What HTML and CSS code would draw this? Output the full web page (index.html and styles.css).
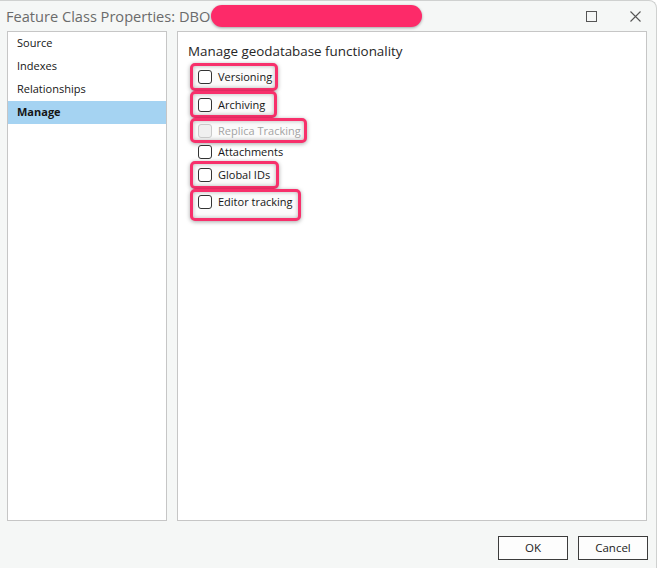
FILE: index.html
```html
<!DOCTYPE html>
<html lang="en">
<head>
<meta charset="utf-8">
<title>Feature Class Properties</title>
<link rel="stylesheet" href="styles.css">
</head>
<body>
<div class="window">
  <div class="titlebar">
    <span class="title">Feature Class Properties: DBO</span>
    <span class="redact"></span>
    <span class="spacer"></span>
    <svg class="tb-icon max" width="11" height="11" viewBox="0 0 11 11"><rect x="0.5" y="0.5" width="10" height="10" fill="none" stroke="#555" stroke-width="1"/></svg>
    <svg class="tb-icon close" width="11" height="11" viewBox="0 0 11 11"><path d="M0.5 0.5 L10.5 10.5 M10.5 0.5 L0.5 10.5" stroke="#555" stroke-width="1.1" fill="none"/></svg>
  </div>
  <div class="content">
    <div class="nav">
      <div class="nav-item">Source</div>
      <div class="nav-item">Indexes</div>
      <div class="nav-item">Relationships</div>
      <div class="nav-item selected">Manage</div>
    </div>
    <div class="panel">
      <div class="heading">Manage geodatabase functionality</div>
      <div class="checks">
        <label class="check marked m1"><span class="box"></span><span>Versioning</span></label>
        <label class="check marked m2"><span class="box"></span><span>Archiving</span></label>
        <label class="check marked m3 disabled"><span class="box"></span><span>Replica Tracking</span></label>
        <label class="check plain"><span class="box"></span><span>Attachments</span></label>
        <label class="check marked m5"><span class="box"></span><span>Global IDs</span></label>
        <label class="check marked m6"><span class="box"></span><span>Editor tracking</span></label>
      </div>
    </div>
  </div>
  <div class="footer">
    <button class="btn">OK</button>
    <button class="btn">Cancel</button>
  </div>
</div>
</body>
</html>
```
FILE: styles.css
```css
html, body {
  margin: 0;
  padding: 0;
  background: #ffffff;
}
body {
  font-family: "Open Sans", "Noto Sans", sans-serif;
  font-size: 11px;
  color: #151515;
}
.window {
  width: 657px;
  height: 568px;
  box-sizing: border-box;
  background: #f5f7f6;
  border-top: 1px solid #cfd1d0;
  border-right: 1px solid #cfd1d0;
  border-top-right-radius: 8px;
  display: flex;
  flex-direction: column;
}
.titlebar {
  height: 30px;
  display: flex;
  align-items: center;
  padding-left: 6px;
  padding-right: 15px;
}
.title {
  font-size: 14.6px;
  color: #6b6b6b;
  white-space: nowrap;
  padding-bottom: 1px;
}
.redact {
  display: block;
  width: 211px;
  height: 22px;
  margin-left: 1px;
  border-radius: 11px;
  background: #fd2a69;
  box-shadow: 0 1px 3px rgba(0,0,0,0.35);
}
.spacer { flex: 1; }
.tb-icon { display: block; }
.max { margin-right: 33px; }
.content {
  height: 490px;
  display: flex;
  gap: 10px;
  padding: 0 9px 0 7px;
}
.nav {
  width: 160px;
  box-sizing: border-box;
  background: #ffffff;
  border: 1px solid #c6c6c6;
}
.nav-item {
  height: 23px;
  line-height: 21px;
  padding-left: 9px;
  padding-bottom: 2px;
  box-sizing: border-box;
  color: #151515;
}
.nav-item.selected {
  background: #a5d3f2;
  font-weight: 700;
}
.panel {
  flex: 1;
  box-sizing: border-box;
  background: #ffffff;
  border: 1px solid #c6c6c6;
  padding: 11px 10px;
}
.heading {
  font-size: 13.4px;
  line-height: 17px;
  padding-bottom: 1px;
  color: #262626;
}
.checks {
  margin-top: 2px;
  margin-left: 2px;
  display: flex;
  flex-direction: column;
  align-items: flex-start;
}
.check {
  display: flex;
  align-items: center;
  gap: 6px;
  box-sizing: border-box;
  white-space: nowrap;
}
.check span:last-child {
  padding-bottom: 1px;
}
.box {
  display: block;
  flex: none;
  width: 14px;
  height: 14px;
  box-sizing: border-box;
  border: 1px solid #333333;
  border-radius: 3px;
  background: #ffffff;
}
.check.plain {
  height: 18px;
  padding-left: 8px;
}
.marked {
  border: 3px solid #f7306b;
  border-radius: 5px;
  padding: 0 0 0 5px;
  background: #fbfbfb;
  box-shadow: 0 1px 4px rgba(0,0,0,0.35), inset 0 0 4px rgba(0,0,0,0.28);
}
.m1 { height: 28px; width: 88px; }
.m2 { height: 27px; width: 87px; }
.m3 { height: 25px; width: 117px; }
.m5 { height: 28px; width: 89px; }
.m6 { height: 32px; width: 111px; padding-bottom: 6px; }
.disabled { color: #a3a3a3; }
.disabled .box {
  border-color: #c9c9c9;
  background: #f0f0f0;
}
.footer {
  flex: 1;
  display: flex;
  justify-content: flex-end;
  align-items: flex-start;
  gap: 10px;
  padding: 15px 8px 0 0;
}
.btn {
  width: 70px;
  height: 24px;
  box-sizing: border-box;
  border: 1px solid #3c3c3c;
  background: #fdfdfd;
  font-family: "Open Sans", "Noto Sans", sans-serif;
  font-size: 11.5px;
  color: #1b1b1b;
  padding: 0 0 1px 0;
  border-radius: 0;
}
```
